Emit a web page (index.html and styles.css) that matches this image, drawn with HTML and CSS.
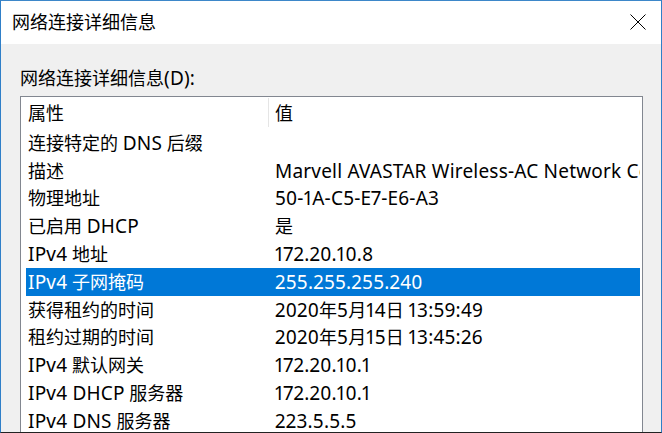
FILE: index.html
```html
<!DOCTYPE html>
<html lang="zh-CN">
<head>
<meta charset="utf-8">
<title>网络连接详细信息</title>
<link rel="stylesheet" href="styles.css">
</head>
<body>
<div class="window">
  <div class="titlebar">
    <span class="title">网络连接详细信息</span>
    <svg class="close" width="16" height="16" viewBox="0 0 16 16"><path d="M0.5 0.5 L15.5 15.5 M15.5 0.5 L0.5 15.5" stroke="#000" stroke-width="1" fill="none"/></svg>
  </div>
  <div class="content">
    <div class="label">网络连接详细信息<span class="lat">(D):</span></div>
    <div class="listbox">
      <div class="header">
        <div class="hcell hcell-prop">属性</div>
        <div class="hdivider"></div>
        <div class="hcell hcell-val">值</div>
      </div>
      <div class="row"><div class="prop">连接特定的 <span class="lat">DNS</span> 后缀</div><div class="val"></div></div>
      <div class="row"><div class="prop">描述</div><div class="val"><span class="lat">Marvell AVASTAR Wireless-AC Network Controller</span></div></div>
      <div class="row"><div class="prop">物理地址</div><div class="val"><span class="lat">50-1A-C5-E7-E6-A3</span></div></div>
      <div class="row"><div class="prop">已启用 <span class="lat">DHCP</span></div><div class="val">是</div></div>
      <div class="row"><div class="prop"><span class="lat">IPv4</span> 地址</div><div class="val"><span class="lat">172.20.10.8</span></div></div>
      <div class="row selected"><div class="prop"><span class="lat">IPv4</span> 子网掩码</div><div class="val"><span class="lat">255.255.255.240</span></div></div>
      <div class="row"><div class="prop">获得租约的时间</div><div class="val"><span class="lat">2020</span>年<span class="lat">5</span>月<span class="lat">14</span>日 <span class="lat">13:59:49</span></div></div>
      <div class="row"><div class="prop">租约过期的时间</div><div class="val"><span class="lat">2020</span>年<span class="lat">5</span>月<span class="lat">15</span>日 <span class="lat">13:45:26</span></div></div>
      <div class="row"><div class="prop"><span class="lat">IPv4</span> 默认网关</div><div class="val"><span class="lat">172.20.10.1</span></div></div>
      <div class="row"><div class="prop"><span class="lat">IPv4 DHCP</span> 服务器</div><div class="val"><span class="lat">172.20.10.1</span></div></div>
      <div class="row"><div class="prop"><span class="lat">IPv4 DNS</span> 服务器</div><div class="val"><span class="lat">223.5.5.5</span></div></div>
    </div>
  </div>
</div>
</body>
</html>
```
FILE: styles.css
```css
html, body {
  margin: 0;
  padding: 0;
  background: #f0f0f0;
}
body {
  font-family: "Noto Sans", "Noto Sans CJK SC", sans-serif;
  font-size: 18px;
  color: #000;
}
.lat {
  font-size: 19px;
  font-variant-numeric: proportional-nums;
  letter-spacing: 0.2px;
}
.window {
  width: 662px;
  height: 433px;
  box-sizing: border-box;
  border-top: 1px solid #3d87c9;
  border-left: 1px solid #2f7fc8;
  border-right: 1px solid #2f7fc8;
  border-bottom: 1px solid #222;
  display: flex;
  flex-direction: column;
  overflow: hidden;
  background: #f0f0f0;
}
.titlebar {
  height: 43px;
  flex: none;
  background: #fff;
  display: flex;
  align-items: center;
  justify-content: space-between;
  padding-left: 11px;
  padding-right: 15px;
}
.title {
  font-size: 18px;
  line-height: 24px;
  margin-top: -1px;
}
.close {
  display: block;
  margin-top: -2px;
}
.content {
  flex: 1;
  min-height: 0;
  padding: 22px 18px 0 19px;
  display: flex;
  flex-direction: column;
}
.label {
  line-height: 24px;
  height: 24px;
  margin-bottom: 6px;
}
.listbox {
  flex: 1;
  background: #fff;
  border: 1px solid #828790;
  border-bottom: none;
  overflow: hidden;
}
.header {
  height: 32px;
  display: flex;
  align-items: center;
}
.hcell {
  line-height: 24px;
}
.hcell-prop {
  width: 247px;
  padding-left: 7px;
  box-sizing: border-box;
}
.hcell-val {
  padding-left: 6px;
}
.hdivider {
  width: 1px;
  height: 29px;
  align-self: flex-start;
  margin-top: 1px;
  background: #e5e5e5;
}
.row {
  height: 27.8px;
  margin: 0 2px 0 5px;
  display: grid;
  grid-template-columns: 242px 1fr;
  align-items: center;
  white-space: nowrap;
  overflow: hidden;
}
.prop {
  padding-left: 2px;
  line-height: 24px;
  overflow: hidden;
}
.val {
  padding-left: 7px;
  line-height: 24px;
  overflow: hidden;
}
.row.selected {
  background: #0078d7;
  color: #fff;
}
```
